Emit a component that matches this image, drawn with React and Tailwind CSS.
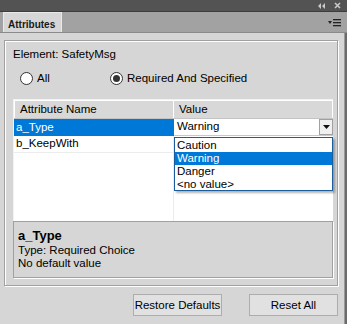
export default function App() {
  return (
    <div className="w-[347px] h-[324px] bg-[#6b6b6b] flex flex-col overflow-hidden font-['Liberation_Sans',Arial,sans-serif] text-[11.5px] text-black">
      {/* title strip */}
      <div className="h-[12px] bg-[#535353] flex items-center justify-end gap-[9px] pr-[6px] border-b border-[#3c3c3c]">
        <svg width="7" height="6" viewBox="0 0 7 6" className="text-[#c9c9c9]">
          <path d="M3 0 L0 3 L3 6 Z M7 0 L4 3 L7 6 Z" fill="currentColor" />
        </svg>
        <svg width="7" height="7" viewBox="0 0 7 7">
          <path d="M1 1 L6 6 M6 1 L1 6" stroke="#c9c9c9" strokeWidth="1.6" />
        </svg>
      </div>
      {/* tab row */}
      <div className="h-[21px] bg-[#a2a2a2] flex items-end border-b border-[#8a8a8a]">
        <div className="ml-[3px] w-[59px] h-[20px] bg-[#d6d6d6] border-t border-l border-r border-[#eaeaea] flex items-center pl-[4px] pt-[3px] font-bold text-[10px] text-[#1a1a1a]">
          Attributes
        </div>
        <div className="flex-1" />
        <div className="h-full flex items-center pr-[6px] pt-[2px]">
          <svg width="13" height="8" viewBox="0 0 13 8">
            <path d="M0 2 L4 2 L2 5 Z" fill="#222" />
            <rect x="5" y="0" width="8" height="1.3" fill="#222" />
            <rect x="5" y="3" width="8" height="1.3" fill="#222" />
            <rect x="5" y="6" width="8" height="1.3" fill="#222" />
          </svg>
        </div>
      </div>
      {/* content */}
      <div className="flex-1 bg-[#d6d6d6] mr-[2px] border-r border-[#9a9a9a] pl-[4px] pr-[6px] pt-[7px] flex flex-col">
        <div className="h-[246px] border border-[#a0a0a0] shadow-[inset_1px_1px_0_#fff,1px_1px_0_#fff] flex flex-col pl-[8px] pr-[4px]">
          <div className="h-[24px] pt-[4px] flex items-center">Element: SafetyMsg</div>
          <div className="h-[24px] pt-[3px] flex items-center">
            <div className="flex items-center ml-[7px] w-[90px]">
              <span className="w-[13px] h-[13px] rounded-full border border-[#333] bg-white mr-[4px]" />
              All
            </div>
            <div className="flex items-center">
              <span className="w-[13px] h-[13px] rounded-full border border-[#333] bg-white mr-[4px] flex items-center justify-center">
                <span className="w-[7px] h-[7px] rounded-full bg-[#333]" />
              </span>
              Required And Specified
            </div>
          </div>
          {/* table */}
          <div className="mt-[10px] w-[320px] h-[122px] bg-white border-t border-l border-[#f2f2f2] flex flex-col relative">
            <div className="h-[19px] flex bg-[#d8d8d8] border-b border-[#c4c4c4] shrink-0">
              <div className="w-[160px] border-r border-[#a8a8a8] flex items-center pl-[5px] pt-[1px] border-l border-t border-white">Attribute Name</div>
              <div className="flex-1 flex items-center pl-[5px] pt-[1px] border-r border-[#a8a8a8] border-t border-white">Value</div>
            </div>
            <div className="h-[17px] flex shrink-0">
              <div className="w-[160px] bg-[#0078d7] text-white flex items-center pl-[2px]">a_Type</div>
              <div className="flex-1 flex items-center pl-[3px] border-b border-[#c8c8c8]">
                <span className="flex-1">Warning</span>
                <span className="w-[14px] h-[16px] border border-[#a0a0a0] bg-[#f0f0f0] flex items-center justify-center">
                  <svg width="7" height="4" viewBox="0 0 7 4"><path d="M0 0 L7 0 L3.5 4 Z" fill="#111" /></svg>
                </span>
              </div>
            </div>
            <div className="h-[17px] flex shrink-0 border-b border-[#ececec]">
              <div className="w-[160px] flex items-center pl-[2px] border-r border-[#ececec]">b_KeepWith</div>
              <div className="flex-1" />
            </div>
            <div className="flex-1 flex">
              <div className="w-[160px] border-r border-[#ececec]" />
            </div>
            {/* dropdown list */}
            <div className="absolute left-[160px] top-[37px] w-[159px] h-[54px] bg-white border border-[#1c5d9c] shadow-[2px_2px_2px_rgba(0,0,0,0.3)] flex flex-col py-[1px] leading-[13px]">
              <div className="h-[13px] pl-[2px]">Caution</div>
              <div className="h-[13px] pl-[2px] bg-[#0078d7] text-white">Warning</div>
              <div className="h-[13px] pl-[2px]">Danger</div>
              <div className="h-[13px] pl-[2px]">&lt;no value&gt;</div>
            </div>
          </div>
          {/* description */}
          <div className="w-[320px] h-[57px] border border-[#a0a0a0] shadow-[1px_1px_0_#fff] pl-[4px] pt-[6px] flex flex-col leading-[13px]">
            <div className="font-bold text-[13px] leading-[16px]">a_Type</div>
            <div>Type: Required Choice</div>
            <div>No default value</div>
          </div>
        </div>
        <div className="flex justify-end gap-[27px] mt-[8px]">
          <button className="w-[89px] h-[22px] bg-[#e1e1e1] border border-[#adadad] flex items-center justify-center pt-[1px]">Restore Defaults</button>
          <button className="w-[89px] h-[22px] bg-[#e1e1e1] border border-[#adadad] flex items-center justify-center pt-[1px]">Reset All</button>
        </div>
      </div>
    </div>
  );
}
